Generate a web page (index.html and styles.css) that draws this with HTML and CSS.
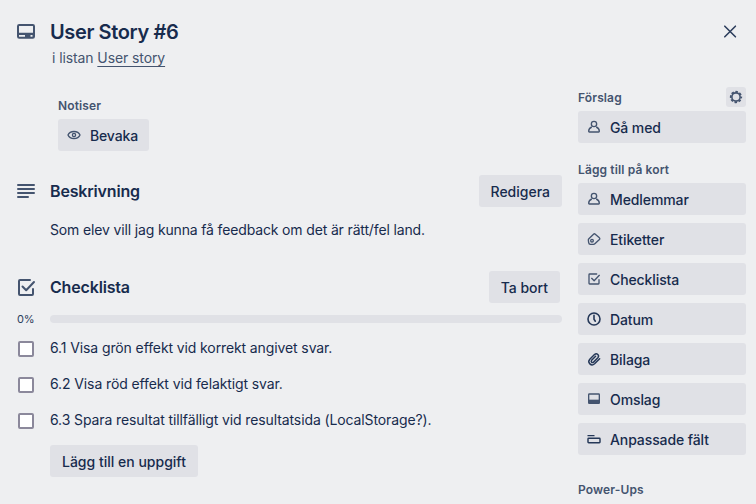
FILE: index.html
```html
<!DOCTYPE html>
<html lang="sv">
<head>
<meta charset="utf-8">
<title>User Story #6</title>
<link rel="stylesheet" href="styles.css">
</head>
<body>
<main class="dialog">
  <header class="header">
    <svg class="icon-lg" viewBox="0 0 24 24"><rect x="4" y="5" width="16" height="12.700" rx="1.200" fill="none" stroke="currentColor" stroke-width="2"/><path d="M4 12.700h16V15H4zM4 14h1v4H4zM11 14h5.500v4H11zM18.500 14H20v4h-1.500z" fill="currentColor"/></svg>
    <div class="heading">
      <h1 class="title">User Story #6</h1>
      <p class="subtitle">i listan <a class="list-link">User story</a></p>
    </div>
    <svg class="close" viewBox="0 0 24 24"><path d="M6.800 6.200l10.600 10.600M17.400 6.200l-10.600 10.600" fill="none" stroke="currentColor" stroke-width="1.600" stroke-linecap="round"/></svg>
  </header>
  <div class="columns">
    <div class="content">
      <section class="notices">
        <h3 class="label">Notiser</h3>
        <button class="button watch"><svg class="icon" viewBox="0 0 24 24"><path d="M3 12C4.500 8.500 8 6.700 12 6.700s7.500 1.800 9 5.300c-1.500 3.500-5 5.300-9 5.300S4.500 15.500 3 12z" fill="none" stroke="currentColor" stroke-width="2"/><circle cx="12" cy="12" r="2.400" fill="none" stroke="currentColor" stroke-width="2"/></svg><span>Bevaka</span></button>
      </section>
      <section class="description">
        <div class="section-head">
          <svg class="icon-lg" viewBox="0 0 24 24"><path d="M4 6h16M4 10h16M4 14h16M4 18h10" fill="none" stroke="currentColor" stroke-width="2" stroke-linecap="round"/></svg>
          <h2 class="section-title">Beskrivning</h2>
          <button class="button">Redigera</button>
        </div>
        <p class="text">Som elev vill jag kunna få feedback om det är rätt/fel land.</p>
      </section>
      <section class="checklist">
        <div class="section-head">
          <svg class="icon-lg" viewBox="0 0 24 24"><path d="M16 5H6a1 1 0 0 0-1 1v13a1 1 0 0 0 1 1h12a1 1 0 0 0 1-1v-5M8.500 11.500l3.700 3.800L20 7" fill="none" stroke="currentColor" stroke-width="2" stroke-linecap="round" stroke-linejoin="round"/></svg>
          <h2 class="section-title">Checklista</h2>
          <button class="button delete">Ta bort</button>
        </div>
        <div class="progress"><span class="percent">0%</span><div class="bar"></div></div>
        <ul class="items">
          <li class="item"><span class="box"></span><span>6.1 Visa grön effekt vid korrekt angivet svar.</span></li>
          <li class="item"><span class="box"></span><span>6.2 Visa röd effekt vid felaktigt svar.</span></li>
          <li class="item"><span class="box"></span><span>6.3 Spara resultat tillfälligt vid resultatsida (LocalStorage?).</span></li>
        </ul>
        <button class="button add">Lägg till en uppgift</button>
      </section>
    </div>
    <aside class="sidebar">
      <div class="side-head"><h3 class="label">Förslag</h3><span class="gear"><svg class="icon" viewBox="0 0 24 24"><circle cx="12" cy="12" r="6.200" fill="none" stroke="currentColor" stroke-width="2.400"/><circle cx="12" cy="12" r="7.900" fill="none" stroke="currentColor" stroke-width="2.600" stroke-dasharray="3.800 2.405" stroke-dashoffset="1.900"/></svg></span></div>
      <button class="button side"><svg class="icon" viewBox="0 0 24 24"><circle cx="12" cy="7.500" r="4" fill="none" stroke="currentColor" stroke-width="2"/><path d="M8.700 12C6 13 4 15.500 4 18.500q0 1 1 1h14q1 0 1-1c0-3-2-5.500-4.700-6.500" fill="none" stroke="currentColor" stroke-width="2"/></svg><span>Gå med</span></button>
      <h3 class="label side-label">Lägg till på kort</h3>
      <div class="actions">
        <button class="button side"><svg class="icon" viewBox="0 0 24 24"><circle cx="12" cy="7.500" r="4" fill="none" stroke="currentColor" stroke-width="2"/><path d="M8.700 12C6 13 4 15.500 4 18.500q0 1 1 1h14q1 0 1-1c0-3-2-5.500-4.700-6.500" fill="none" stroke="currentColor" stroke-width="2"/></svg><span>Medlemmar</span></button>
        <button class="button side"><svg class="icon" viewBox="0 0 24 24"><path d="M4.300 11.500l7-6.700q1.300-1.200 2.600 0l6.200 5.500q1.200 1.200 0 2.400l-6.800 6.500q-.8.800-2 .8H6.500Q4.300 20 4 17.500l-.5-4q0-1.200.8-2z" fill="none" stroke="currentColor" stroke-width="2" stroke-linejoin="round"/><circle cx="9" cy="14.500" r="2" fill="none" stroke="currentColor" stroke-width="2"/></svg><span>Etiketter</span></button>
        <button class="button side"><svg class="icon" viewBox="0 0 24 24"><path d="M16 4.500H5.500q-1 0-1 1v13q0 1 1 1h13q1 0 1-1V13M8.500 11l3.700 3.700L20 6.500" fill="none" stroke="currentColor" stroke-width="2" stroke-linecap="round" stroke-linejoin="round"/></svg><span>Checklista</span></button>
        <button class="button side"><svg class="icon dark" viewBox="0 0 24 24"><circle cx="12" cy="12" r="9" fill="none" stroke="currentColor" stroke-width="2.400"/><path d="M12 6.500v5.800l2 3" fill="none" stroke="currentColor" stroke-width="2.400" stroke-linecap="round"/></svg><span>Datum</span></button>
        <button class="button side"><svg class="icon dark" viewBox="0 0 24 24"><path d="M20.500 11.500l-7.600 7.600c-5 4.500-11.500-1.600-7.200-6.700l7-7c3.700-3.200 8 1.200 5.100 4.700l-6.500 6.600c-2.300 1.800-4.500-.5-2.900-2.700l6-6" fill="none" stroke="currentColor" stroke-width="2.200" stroke-linecap="round"/></svg><span>Bilaga</span></button>
        <button class="button side"><svg class="icon" viewBox="0 0 24 24"><rect x="4" y="4.500" width="16" height="14" rx="1" fill="none" stroke="currentColor" stroke-width="2"/><path d="M4 13h16v5.500H4z" fill="currentColor"/></svg><span>Omslag</span></button>
        <button class="button side"><svg class="icon dark" viewBox="0 0 24 24"><path d="M3 7h9" fill="none" stroke="currentColor" stroke-width="2" stroke-linecap="round"/><rect x="3" y="11" width="18" height="6.500" rx="1" fill="none" stroke="currentColor" stroke-width="2.200"/></svg><span>Anpassade fält</span></button>
      </div>
      <h3 class="label powerups">Power-Ups</h3>
    </aside>
  </div>
</main>
</body>
</html>
```
FILE: styles.css
```css
* { box-sizing: border-box; }
body { margin: 0; background: #eeeff1; color: #172b4d; font: 14px/20px Inter, sans-serif; overflow: hidden; }
h1, h2, h3, p, ul { margin: 0; padding: 0; }
.dialog { width: 756px; height: 504px; overflow: hidden; }
.header { display: flex; height: 87px; padding: 20px 14px 0; align-items: flex-start; }
.icon-lg { width: 24px; height: 24px; flex: none; color: #44546f; }
.heading { flex: 1; padding-left: 12px; }
.title { font-size: 20px; line-height: 24px; font-weight: 600; letter-spacing: -0.38px; }
.subtitle { margin: 4px 0 0 2px; color: #44546f; letter-spacing: -0.1px; }
.list-link { text-decoration: underline; text-underline-offset: 3px; }
.close { width: 24px; height: 24px; color: #2c3e5d; }
.columns { display: flex; gap: 16px; }
.content { width: 562px; padding-left: 14px; }
.label { padding-top: 1px; font-size: 12px; line-height: 20px; height: 20px; font-weight: 600; letter-spacing: 0.13px; color: #44546f; }
.button { display: flex; align-items: center; height: 32px; padding: 2px 12px 0; border: 0; border-radius: 3px; background: #e0e1e6; color: #172b4d; font: 500 14px/20px Inter, sans-serif; white-space: nowrap; }
.icon { width: 16px; height: 16px; flex: none; color: #44546f; margin-top: -3px; }
.dark { color: #253858; }
.notices { padding: 8px 0 0 44px; }
.notices .button { margin-top: 4px; width: 91px; padding-left: 8px; gap: 8px; letter-spacing: -0.15px; }
.section-head { display: flex; align-items: center; height: 32px; }
.section-title { flex: 1; padding-left: 12px; font-size: 16px; line-height: 20px; font-weight: 600; letter-spacing: -0.17px; }
.description { margin-top: 24px; }
.description .text { margin: 13px 0 0 36px; letter-spacing: -0.15px; }
.checklist { margin-top: 31px; }
.delete { margin-right: 2px; }
.progress { display: flex; align-items: center; height: 16px; margin-top: 8px; }
.percent { width: 36px; padding-left: 3px; font-size: 11px; letter-spacing: -0.2px; color: #2c3e5d; }
.bar { flex: 1; height: 8px; border-radius: 4px; background: #e0e1e6; }
.items { list-style: none; margin-top: 3px; letter-spacing: -0.11px; }
.item { display: flex; height: 36px; padding: 8px 0 0 4px; gap: 16px; }
.box { width: 16px; height: 16px; margin-top: 3px; border: 2px solid #8b889b; border-radius: 2px; background: #fff; }
.add { margin: 7px 0 0 36px; }
.sidebar { width: 168px; }
.side-head { display: flex; justify-content: space-between; align-items: center; height: 20px; margin-bottom: 4px; }
.gear { display: flex; align-items: center; justify-content: center; width: 20px; height: 20px; border-radius: 3px; background: #e0e1e6; }
.gear .icon { margin: 0; }
.side { width: 168px; padding-left: 8px; gap: 8px; letter-spacing: -0.1px; }
.side-label { margin: 16px 0 4px; }
.actions { display: flex; flex-direction: column; gap: 8px; }
.powerups { margin-top: 24px; }
```
